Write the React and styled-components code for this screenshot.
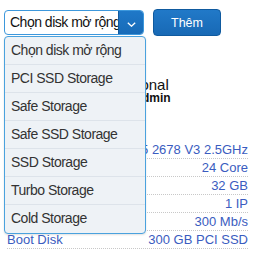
import React, {useState} from 'react';
import styled, {createGlobalStyle} from 'styled-components';

const GlobalStyle = createGlobalStyle`
    body {
        margin: 0;
        background: #fff;
        font-family: 'Liberation Sans', Arial, sans-serif;
    }
`;

const Page = styled.div`
    width: 257px;
    height: 255px;
    padding: 10px 0 0 4px;
    box-sizing: border-box;
    overflow: hidden;
`;

const Toolbar = styled.div`
    display: flex;
    align-items: flex-start;
    gap: 9px;
`;

const SelectWrap = styled.div`
    position: relative;
    width: 140px;
`;

const SelectBox = styled.div`
    display: flex;
    height: 25px;
    box-sizing: border-box;
    border: 1px solid #3d98dc;
    border-radius: 4px;
    overflow: hidden;
    background: #fff;
    cursor: pointer;
`;

const SelectValue = styled.span`
    flex: 1;
    min-width: 0;
    padding-left: 5px;
    font-size: 14px;
    letter-spacing: -0.5px;
    line-height: 23px;
    color: #111;
    white-space: nowrap;
    overflow: hidden;
`;

const ArrowBox = styled.span`
    width: 25px;
    display: flex;
    align-items: center;
    justify-content: center;
    padding-top: 3px;
    box-sizing: border-box;
    background: linear-gradient(#1f78c8, #176bb8);
    border-left: 1px solid #125a9e;
`;

const Menu = styled.ul`
    position: absolute;
    top: 26px;
    left: 0;
    width: 142px;
    margin: 0;
    padding: 0;
    list-style: none;
    box-sizing: border-box;
    background: #eef2f6;
    border: 1px solid #4aa2de;
    border-radius: 4px;
    box-shadow: 0 1px 2px rgba(0, 0, 0, 0.12);
    z-index: 2;
`;

const MenuItem = styled.li`
    height: 28px;
    box-sizing: border-box;
    padding-left: 6px;
    font-size: 14px;
    letter-spacing: -0.5px;
    line-height: 27px;
    color: #333;
    border-bottom: 1px solid #dde3ea;
    cursor: pointer;

    &:last-child {
        border-bottom: none;
    }
`;

const AddButton = styled.button`
    width: 68px;
    height: 27px;
    margin-top: -1px;
    padding: 0;
    border: 1px solid #0f5a9f;
    border-radius: 4px;
    background: linear-gradient(#2179c8, #1869b5);
    color: #fff;
    font-family: 'Liberation Sans', Arial, sans-serif;
    font-size: 12.5px;
    cursor: pointer;
`;

const Card = styled.div`
    margin: 41px 9px 0 3px;
`;

const Title = styled.div`
    text-align: center;
    font-size: 15px;
    line-height: 15px;
    color: #111;
`;

const Subtitle = styled.div`
    text-align: center;
    font-size: 12px;
    font-weight: bold;
    line-height: 12px;
    color: #111;
`;

const SpecList = styled.div`
    margin-top: 37px;
`;

const SpecRow = styled.div`
    display: flex;
    justify-content: space-between;
    height: 18px;
    box-sizing: border-box;
    border-bottom: 1px dotted #c8c8c8;
    font-size: 13px;
    line-height: 17px;
    color: #3a5cc0;
`;

const options = [
    'Chọn disk mở rộng',
    'PCI SSD Storage',
    'Safe Storage',
    'Safe SSD Storage',
    'SSD Storage',
    'Turbo Storage',
    'Cold Storage'
];

const specs = [
    {label: 'CPU', value: 'Xeon E5 2678 V3 2.5GHz'},
    {label: 'Core', value: '24 Core'},
    {label: 'RAM', value: '32 GB'},
    {label: 'IP', value: '1 IP'},
    {label: 'Băng thông', value: '300 Mb/s'},
    {label: 'Boot Disk', value: '300 GB PCI SSD'}
];

const Chevron = () => (
    <svg width="9" height="5" viewBox="0 0 9 5">
        <path d="M0.8 0.8 L4.5 4.2 L8.2 0.8" fill="none" stroke="#fff" strokeWidth="1.3"/>
    </svg>
);

const App = () => {
    const [open, setOpen] = useState(true);
    const [selected, setSelected] = useState(0);

    return (
        <Page>
            <GlobalStyle/>
            <Toolbar>
                <SelectWrap>
                    <SelectBox onClick={() => setOpen(!open)}>
                        <SelectValue>{options[selected]}</SelectValue>
                        <ArrowBox><Chevron/></ArrowBox>
                    </SelectBox>
                    {open && (
                        <Menu>
                            {options.map((option, index) => (
                                <MenuItem key={index} onClick={() => { setSelected(index); setOpen(false); }}>
                                    {option}
                                </MenuItem>
                            ))}
                        </Menu>
                    )}
                </SelectWrap>
                <AddButton>Thêm</AddButton>
            </Toolbar>
            <Card>
                <Title>Professional</Title>
                <Subtitle>Quản trị Admin</Subtitle>
                <SpecList>
                    {specs.map((spec) => (
                        <SpecRow key={spec.label}>
                            <span>{spec.label}</span>
                            <span>{spec.value}</span>
                        </SpecRow>
                    ))}
                </SpecList>
            </Card>
        </Page>
    );
};

export default App;
